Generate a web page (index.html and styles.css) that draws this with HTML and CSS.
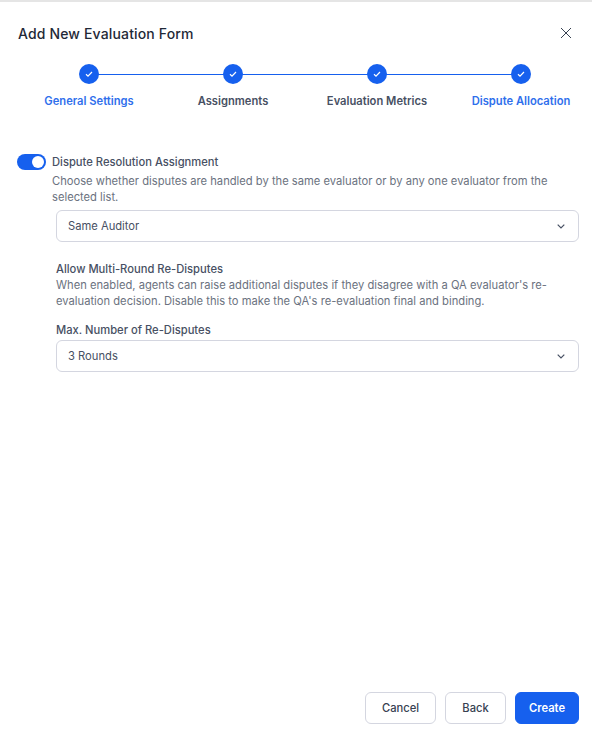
FILE: index.html
```html
<html lang="en">

<head>
    <meta charset="utf-8" />
    <title>Add New Evaluation Form</title>
    <link rel="stylesheet" href="styles.css">
</head>

<body>
<div class="panel">

    <div class="header">
        <h1>Add New Evaluation Form</h1>
        <button class="close" aria-label="Close">
            <svg width="12" height="12" viewBox="0 0 12 12"><path d="M1 1l10 10M11 1L1 11" /></svg>
        </button>
    </div>

    <div class="stepper">
        <div class="step"><span class="dot"><svg width="8" height="8" viewBox="0 0 8 8"><path d="M1 4.3l2 1.9 4-4.2" /></svg></span><span class="name active">General Settings</span></div>
        <div class="step"><span class="dot"><svg width="8" height="8" viewBox="0 0 8 8"><path d="M1 4.3l2 1.9 4-4.2" /></svg></span><span class="name">Assignments</span></div>
        <div class="step"><span class="dot"><svg width="8" height="8" viewBox="0 0 8 8"><path d="M1 4.3l2 1.9 4-4.2" /></svg></span><span class="name">Evaluation Metrics</span></div>
        <div class="step last"><span class="dot"><svg width="8" height="8" viewBox="0 0 8 8"><path d="M1 4.3l2 1.9 4-4.2" /></svg></span><span class="name active">Dispute Allocation</span></div>
    </div>

    <div class="setting">
        <span class="toggle"><span class="knob"></span></span>
        <div class="setting-text">
            <div class="label">Dispute Resolution Assignment</div>
            <p class="desc">Choose whether disputes are handled by the same evaluator or by any one evaluator from the selected list.</p>
        </div>
    </div>

    <div class="sub">
        <div class="select">
            <span>Same Auditor</span>
            <svg width="8" height="5" viewBox="0 0 8 5"><path d="M.7.7L4 4l3.3-3.3" /></svg>
        </div>

        <div class="label multi">Allow Multi-Round Re-Disputes</div>
        <p class="desc">When enabled, agents can raise additional disputes if they disagree with a QA evaluator's re-evaluation decision. Disable this to make the QA's re-evaluation final and binding.</p>

        <div class="label max">Max. Number of Re-Disputes</div>
        <div class="select">
            <span>3 Rounds</span>
            <svg width="8" height="5" viewBox="0 0 8 5"><path d="M.7.7L4 4l3.3-3.3" /></svg>
        </div>
    </div>

    <div class="footer">
        <button class="btn cancel">Cancel</button>
        <button class="btn back">Back</button>
        <button class="btn create">Create</button>
    </div>

</div>
</body>
</html>
```

FILE: styles.css
```css
html, body {
    margin: 0;
    height: 100%;
    overflow: hidden;
    background: white;
}

body {
    font-family: Inter, "Noto Sans", sans-serif;
    color: #1f2937;
}

.panel {
    height: 731px;
    box-sizing: border-box;
    border-top: 2px solid #e5e5e5;
    display: flex;
    flex-direction: column;
}

.header {
    display: flex;
    justify-content: space-between;
    align-items: center;
    height: 22px;
    margin-top: 20px;
    padding: 0 20px 0 18px;
}

.header h1 {
    margin: 0;
    font-size: 14px;
    font-weight: 500;
    letter-spacing: 0.15px;
    color: #1f2937;
}

.close {
    display: flex;
    border: none;
    background: none;
    padding: 0;
}

.close svg path {
    fill: none;
    stroke: #374151;
    stroke-width: 1;
}

.stepper {
    display: grid;
    grid-template-columns: repeat(4, 144px);
    margin: 20px 0 0 17px;
}

.step {
    position: relative;
    display: flex;
    flex-direction: column;
    align-items: center;
    gap: 10px;
}

/* line going to the next dot */
.step::after {
    content: "";
    position: absolute;
    left: 50%;
    top: 10px;
    width: 144px;
    height: 1px;
    background: #1660ee;
}

.step.last::after {
    display: none;
}

.dot {
    position: relative;
    z-index: 1;
    width: 20px;
    height: 20px;
    border-radius: 50%;
    background: #1660ee;
    display: flex;
    align-items: center;
    justify-content: center;
}

.dot svg path {
    fill: none;
    stroke: white;
    stroke-width: 1.2;
}

.name {
    font-size: 11.2px;
    line-height: 14px;
    font-weight: 600;
    color: #475063;
    white-space: nowrap;
}

.name.active {
    color: #2f6fec;
}

.setting {
    display: flex;
    gap: 6px;
    margin: 46px 0 0 17px;
    padding-right: 30px;
}

.toggle {
    flex: none;
    width: 29px;
    height: 16px;
    border-radius: 8px;
    background: #1660ee;
    display: flex;
    align-items: center;
    justify-content: flex-end;
    padding-right: 2px;
    box-sizing: border-box;
}

.knob {
    width: 12px;
    height: 12px;
    border-radius: 50%;
    background: white;
}

.label {
    font-size: 11.2px;
    line-height: 16px;
    font-weight: 500;
    color: #475063;
}

.desc {
    margin: 0;
    font-size: 11.2px;
    line-height: 16px;
    color: #6b7280;
}

.setting-text .desc {
    margin-top: 3px;
}

.sub {
    margin: 5px 13px 0 56px;
}

.select {
    height: 32px;
    box-sizing: border-box;
    border: 1px solid #d4d6e0;
    border-radius: 6px;
    padding: 0 13px 0 11px;
    display: flex;
    align-items: center;
    justify-content: space-between;
    font-size: 11.2px;
    color: #475063;
}

.select svg path {
    fill: none;
    stroke: #475063;
    stroke-width: 1.2;
}

.multi {
    margin-top: 19px;
}

.max {
    margin: 13px 0 2px;
}

.footer {
    margin-top: auto;
    padding: 0 13px 7px 0;
    display: flex;
    justify-content: flex-end;
    gap: 9px;
}

.btn {
    height: 32px;
    box-sizing: border-box;
    border: 1px solid #d4d6e0;
    border-radius: 6px;
    background: white;
    font-family: inherit;
    font-size: 11.2px;
    font-weight: 500;
    color: #374151;
    padding: 0;
}

.cancel {
    width: 71px;
}

.back {
    width: 61px;
}

.create {
    width: 64px;
    background: #1660ee;
    border-color: #1660ee;
    color: white;
    font-weight: 600;
}
```
